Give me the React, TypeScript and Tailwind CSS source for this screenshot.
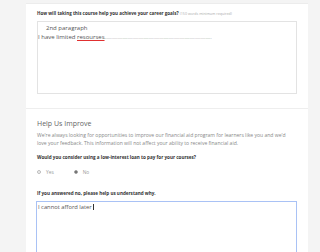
export default function App() {
  return (
    <div className="h-[252px] w-[320px] overflow-hidden bg-[#f4f4f4] pl-[26px] pr-[12px] pt-[3px] font-['Open_Sans',sans-serif]">
      <div className="h-[300px] border-t border-[#ececec] bg-white">
        <section className="px-[11px] pt-[6px] pb-[14px]">
          <p className="text-[4.5px] leading-[6px] font-bold text-[#333]">
            How will taking this course help you achieve your career goals?{" "}
            <span className="text-[3.6px] font-normal text-[#aaa]">(150 words minimum required)</span>
          </p>
          <div className="mt-[4px] h-[73px] w-[260px] border border-[#e3e3e3] text-[6px] leading-[8.5px] text-[#555]">
            <p className="pl-[8px] pt-[2px]">2nd paragraph</p>
            <p>
              I have limited{" "}
              <span className="underline decoration-[#e03030] decoration-[0.6px] underline-offset-[1px]">resourses</span>
              <span className="text-[4px] text-[#777]">......................................................................................................</span>
            </p>
          </div>
        </section>
        <div className="border-t border-[#eeeeee]" />
        <section className="px-[11px] pt-[10px]">
          <h2 className="text-[7px] leading-[9px] text-[#666]">Help Us Improve</h2>
          <p className="mt-[4px] text-[5.05px] leading-[7.5px] text-[#888]">
            We're always looking for opportunities to improve our financial aid program for learners like you and we'd
            <br />
            love your feedback. This information will not affect your ability to receive financial aid.
          </p>
          <p className="mt-[7px] text-[4.6px] leading-[6px] font-bold text-[#333]">
            Would you consider using a low-interest loan to pay for your courses?
          </p>
          <div className="mt-[9px] flex items-center text-[4.8px] leading-[6px] text-[#999]">
            <label className="flex items-center gap-[5px]">
              <span className="h-[4px] w-[4px] rounded-full border border-[#bbb] bg-[#f6f6f6]" />
              Yes
            </label>
            <label className="ml-[20px] flex items-center gap-[5px]">
              <span className="flex h-[4px] w-[4px] items-center justify-center rounded-full border border-[#999] bg-[#f6f6f6]">
                <span className="h-[2px] w-[2px] rounded-full bg-[#555]" />
              </span>
              No
            </label>
          </div>
          <p className="mt-[15px] text-[4.6px] leading-[6px] font-bold text-[#333]">
            If you answered no, please help us understand why.
          </p>
          <div className="-ml-px mt-[5px] h-[80px] w-[261px] border border-[#a9c2f5] px-[1px] pt-[1px] text-[5.8px] leading-[8px] text-[#555]">
            I cannot afford later<span className="ml-px inline-block h-[6px] w-[0.6px] bg-[#333] align-middle" />
          </div>
        </section>
      </div>
    </div>
  );
}
